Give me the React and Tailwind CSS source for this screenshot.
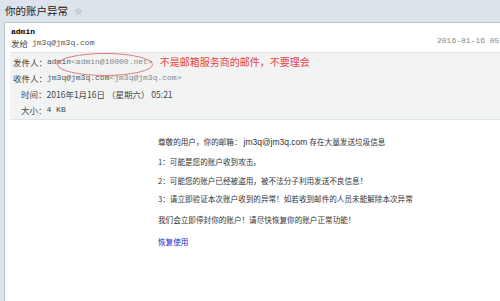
const cjk = { fontFamily: '"Noto Sans CJK SC", sans-serif' };
const mono = { fontFamily: '"Liberation Mono", "Noto Sans CJK SC", monospace' };

function Star() {
  return (
    <svg width="11" height="11" viewBox="0 0 24 24" className="ml-[5px] mt-[1px]">
      <path
        d="M12 1.5l3.2 6.9 7.5.8-5.6 5.1 1.6 7.4L12 17.9l-6.7 3.8 1.6-7.4-5.6-5.1 7.5-.8z"
        fill="#c9cfd6"
      />
    </svg>
  );
}

function Row({ label, children, indent }) {
  return (
    <div className={`flex items-center h-[16px] ${indent ? "pl-[11px]" : "pl-[3px]"}`}>
      <span className="text-[8.5px] text-[#444]" style={cjk}>
        {label}
      </span>
      {children}
    </div>
  );
}

export default function App() {
  return (
    <div className="w-[500px] h-[301px] overflow-hidden bg-[#dde3ea] flex flex-col" style={cjk}>
      <div className="h-[22px] flex items-center pl-[5px] shrink-0">
        <span className="text-[10.5px] text-[#222] leading-none">你的账户异常</span>
        <Star />
      </div>
      <div className="flex-1 ml-[4px] bg-white border-l border-t border-[#b9c3cd] flex flex-col">
        <div className="h-[29px] relative pl-[6px] pt-[4px]">
          <div className="text-[8px] font-bold text-black leading-[9px]" style={mono}>
            admin
          </div>
          <div className="flex items-center h-[14px]">
            <span className="text-[8.5px] text-[#444]">发给</span>
            <span className="ml-[4px] text-[8px] text-[#555]" style={mono}>
              jm3q@jm3q.com
            </span>
          </div>
          <div className="absolute left-[432px] top-[12px] text-[8px] text-[#888] whitespace-nowrap" style={mono}>
            2016-01-16 05:21
          </div>
        </div>
        <div className="ml-[5px] h-[68px] bg-[#f2f4f4] border-t border-b border-[#e1e4e6] pt-[1px] relative">
          <Row label="发件人：">
            <span className="text-[8px] text-[#555]" style={mono}>
              admin
              <span className="text-[#888]">&lt;admin@10000.net&gt;</span>
            </span>
            <span className="ml-[7px] text-[10px] text-[#e8403f] leading-none">不是邮箱服务商的邮件，不要理会</span>
          </Row>
          <Row label="收件人：">
            <span className="text-[8px] text-[#555]" style={mono}>
              jm3q@jm3q.com
              <span className="text-[#888]">&lt;jm3q@jm3q.com&gt;</span>
            </span>
          </Row>
          <Row label="时间：" indent>
            <span className="text-[8.5px] text-[#444]">2016年1月16日 （星期六） 05:21</span>
          </Row>
          <Row label="大小：" indent>
            <span className="text-[8px] text-[#444]" style={mono}>
              4 KB
            </span>
          </Row>
          <svg className="absolute left-[46px] top-[-1px]" width="98" height="25" viewBox="0 0 98 25">
            <ellipse cx="49" cy="12.5" rx="47.5" ry="11" fill="none" stroke="#e36b6b" strokeWidth="0.9" />
          </svg>
        </div>
        <div className="pl-[153px] pt-[12px] text-[7.6px] text-[#333] flex flex-col">
          <div className="h-[20px] flex items-center">
            尊敬的用户，你的邮箱：<span className="text-[8.5px] mx-[2px]" style={{ fontFamily: '"Liberation Sans", sans-serif' }}>jm3q@jm3q.com</span> 存在大量发送垃圾信息
          </div>
          <div className="h-[20px] flex items-center">1：可能是您的账户收到攻击。</div>
          <div className="h-[18px] flex items-center">2：可能您的账户已经被盗用，被不法分子利用发送不良信息！</div>
          <div className="h-[18px] flex items-center">3：请立即验证本次账户收到的异常！如若收到邮件的人员未能解除本次异常</div>
          <div className="h-[22px] flex items-center mt-[1px]">我们会立即停封你的账户！请尽快恢复你的账户正常功能！</div>
          <div className="h-[22px] flex items-center text-[#2424c8]">恢复使用</div>
        </div>
      </div>
    </div>
  );
}
